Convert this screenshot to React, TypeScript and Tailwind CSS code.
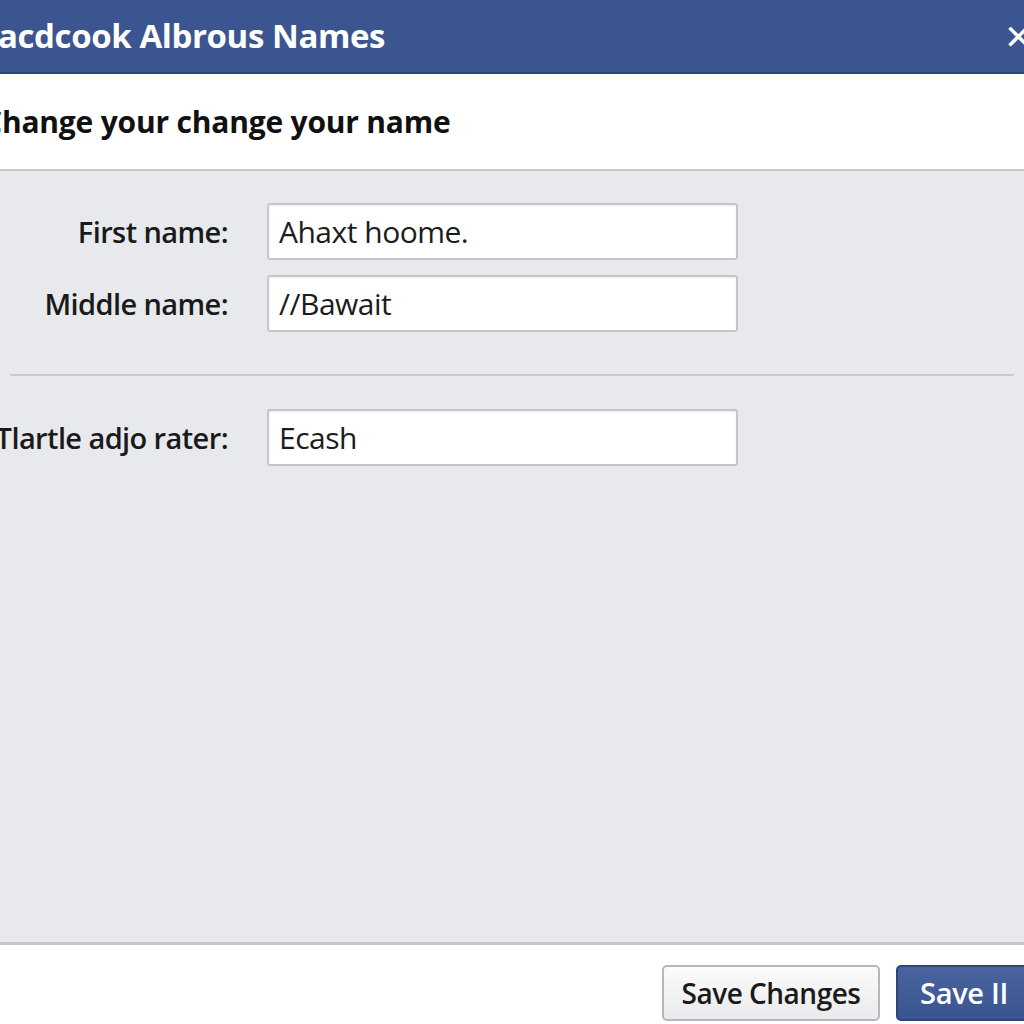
import React from "react";

const font = { fontFamily: '"Open Sans", "Noto Sans", sans-serif' };

function Field({ label, value }: { label: string; value: string }) {
  return (
    <div className="flex items-center">
      <div className="flex w-[230px] shrink-0 justify-end pr-[2px] text-[29px] font-semibold tracking-[-0.6px] text-[#1a1a1a] whitespace-nowrap">
        <span className="shrink-0">{label}</span>
      </div>
      <div className="ml-[37px] flex h-[57px] w-[471px] items-center rounded-[3px] border-2 border-[#c4c6cb] bg-white px-[10px] text-[30px] tracking-[-0.5px] text-[#1c1c1c] shadow-[inset_0_1px_2px_rgba(0,0,0,0.08)]">
        {value}
      </div>
    </div>
  );
}

export default function App() {
  return (
    <div className="flex h-[1024px] w-[1024px] flex-col overflow-hidden bg-white" style={font}>
      <div className="flex h-[74px] shrink-0 items-center justify-between border-b-2 border-[#2b4478] bg-[#3b5590]">
        <div className="-ml-[2px] text-[33px] font-bold tracking-[-0.4px] text-white whitespace-nowrap">
          acdcook Albrous Names
        </div>
        <div className="-mr-[8px] text-[34px] leading-none text-white">✕</div>
      </div>
      <div className="flex h-[97px] shrink-0 items-center border-b-2 border-[#c8c9cd] bg-white">
        <div className="-ml-[17px] text-[30px] font-bold tracking-[-0.2px] text-[#111] whitespace-nowrap">
          Change your change your name
        </div>
      </div>
      <div className="flex flex-1 flex-col bg-[#e8e9ed] pt-[32px]">
        <div className="flex flex-col gap-[15px]">
          <Field label="First name:" value="Ahaxt hoome." />
          <Field label="Middle name:" value="//Bawait" />
        </div>
        <div className="mx-[10px] mt-[42px] h-[2px] bg-[#c9cacf]" />
        <div className="mt-[33px]">
          <Field label="Tlartle adjo rater:" value="Ecash" />
        </div>
      </div>
      <div className="flex h-[82px] shrink-0 items-start justify-end gap-[16px] border-t-[3px] border-[#c6c7cc] bg-white pt-[20px]">
        <button className="flex h-[56px] w-[218px] items-center justify-center rounded-[5px] border-2 border-[#b5b7bc] bg-gradient-to-b from-[#fbfbfb] to-[#e9eaec] text-[28px] font-semibold tracking-[-0.5px] text-[#1a1a1a]">
          Save Changes
        </button>
        <button className="-mr-[20px] flex h-[56px] w-[148px] items-center justify-start rounded-[5px] border-2 border-[#2e4677] bg-gradient-to-b from-[#4a64a0] to-[#3a5490] pl-[22px] text-[29px] font-semibold tracking-[-0.3px] text-white">
          Save II
        </button>
      </div>
    </div>
  );
}
